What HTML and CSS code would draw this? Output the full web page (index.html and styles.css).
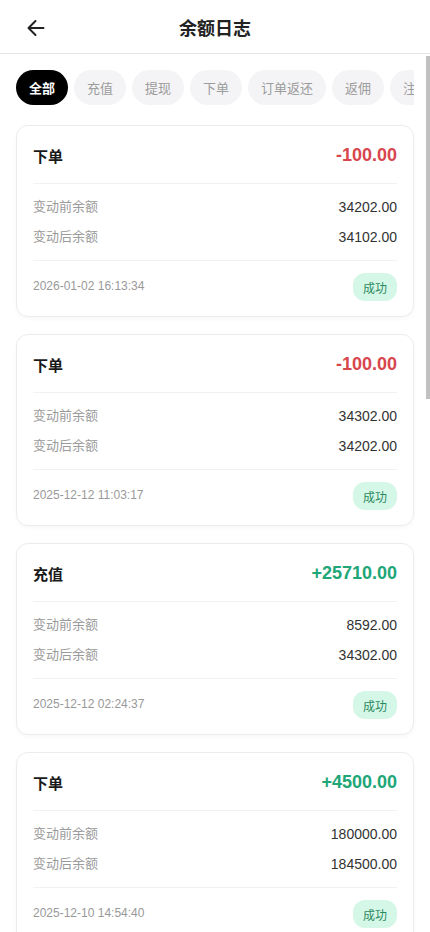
FILE: index.html
```html
<!DOCTYPE html>
<html lang="zh-CN">
<head>
<meta charset="utf-8">
<meta name="viewport" content="width=device-width, initial-scale=1">
<title>余额日志</title>
<link rel="stylesheet" href="styles.css">
</head>
<body>
<div class="app">
  <header class="topbar">
    <button class="back" aria-label="返回">
      <svg width="18" height="18" viewBox="0 0 18 18" fill="none" stroke="#222" stroke-width="2" stroke-linecap="round" stroke-linejoin="round"><path d="M16.5 9H1.5M8.5 2L1.5 9l7 7"/></svg>
    </button>
    <h1 class="title">余额日志</h1>
  </header>
  <div class="viewport">
    <main class="scroller">
      <nav class="tabs">
        <span class="tab active">全部</span>
        <span class="tab">充值</span>
        <span class="tab">提现</span>
        <span class="tab">下单</span>
        <span class="tab">订单返还</span>
        <span class="tab">返佣</span>
        <span class="tab">注册赠送</span>
      </nav>
      <section class="list">
        <article class="card">
          <div class="card-head"><span class="type">下单</span><span class="amount minus">-100.00</span></div>
          <div class="card-body">
            <div class="row"><span class="label">变动前余额</span><span class="value">34202.00</span></div>
            <div class="row"><span class="label">变动后余额</span><span class="value">34102.00</span></div>
          </div>
          <div class="card-foot"><span class="date">2026-01-02 16:13:34</span><span class="badge">成功</span></div>
        </article>
        <article class="card">
          <div class="card-head"><span class="type">下单</span><span class="amount minus">-100.00</span></div>
          <div class="card-body">
            <div class="row"><span class="label">变动前余额</span><span class="value">34302.00</span></div>
            <div class="row"><span class="label">变动后余额</span><span class="value">34202.00</span></div>
          </div>
          <div class="card-foot"><span class="date">2025-12-12 11:03:17</span><span class="badge">成功</span></div>
        </article>
        <article class="card">
          <div class="card-head"><span class="type">充值</span><span class="amount plus">+25710.00</span></div>
          <div class="card-body">
            <div class="row"><span class="label">变动前余额</span><span class="value">8592.00</span></div>
            <div class="row"><span class="label">变动后余额</span><span class="value">34302.00</span></div>
          </div>
          <div class="card-foot"><span class="date">2025-12-12 02:24:37</span><span class="badge">成功</span></div>
        </article>
        <article class="card">
          <div class="card-head"><span class="type">下单</span><span class="amount plus">+4500.00</span></div>
          <div class="card-body">
            <div class="row"><span class="label">变动前余额</span><span class="value">180000.00</span></div>
            <div class="row"><span class="label">变动后余额</span><span class="value">184500.00</span></div>
          </div>
          <div class="card-foot"><span class="date">2025-12-10 14:54:40</span><span class="badge">成功</span></div>
        </article>
        <article class="card">
          <div class="card-head"><span class="type">下单</span><span class="amount minus">-4500.00</span></div>
          <div class="card-body">
            <div class="row"><span class="label">变动前余额</span><span class="value">184500.00</span></div>
            <div class="row"><span class="label">变动后余额</span><span class="value">180000.00</span></div>
          </div>
          <div class="card-foot"><span class="date">2025-12-10 14:50:12</span><span class="badge">成功</span></div>
        </article>
        <article class="card">
          <div class="card-head"><span class="type">充值</span><span class="amount plus">+10000.00</span></div>
          <div class="card-body">
            <div class="row"><span class="label">变动前余额</span><span class="value">174500.00</span></div>
            <div class="row"><span class="label">变动后余额</span><span class="value">184500.00</span></div>
          </div>
          <div class="card-foot"><span class="date">2025-12-09 20:11:05</span><span class="badge">成功</span></div>
        </article>
      </section>
    </main>
    <div class="scroll-thumb" aria-hidden="true"></div>
  </div>
</div>
</body>
</html>
```
FILE: styles.css
```css
* { box-sizing: border-box; }
html, body { margin: 0; padding: 0; height: 100%; }
body {
  font-family: "Liberation Sans", Arial, "Noto Sans CJK SC", sans-serif;
  background: #fff;
  color: #222;
}
.app {
  height: 100vh;
  display: flex;
  flex-direction: column;
}
.topbar {
  flex: 0 0 auto;
  height: 54px;
  border-bottom: 1px solid #e6e6e6;
  display: flex;
  align-items: center;
  justify-content: center;
  position: relative;
}
.back {
  position: absolute;
  left: 26px;
  top: 18px;
  width: 20px;
  height: 20px;
  padding: 0 0 0 1px;
  border: 0;
  background: none;
  display: flex;
  align-items: center;
}
.title {
  margin: 0;
  font-size: 18px;
  font-weight: 700;
  color: #222;
  line-height: 1;
  font-family: "Noto Sans CJK SC", sans-serif;
}
.viewport {
  flex: 1 1 auto;
  min-height: 0;
  position: relative;
  display: flex;
}
.scroller {
  flex: 1 1 auto;
  overflow-y: auto;
  padding: 16px 16px 24px 16px;
  scrollbar-width: none;
}
.scroller::-webkit-scrollbar { display: none; }
.scroll-thumb {
  position: absolute;
  right: 0;
  top: 2px;
  width: 4px;
  height: 343px;
  background: #c1c1c1;
}

.tabs {
  display: flex;
  gap: 6px;
  overflow-x: auto;
  margin-bottom: 20px;
  scrollbar-width: none;
}
.tabs::-webkit-scrollbar { display: none; }
.tab {
  flex: 0 0 auto;
  height: 35px;
  padding: 0 13px;
  border-radius: 18px;
  background: #f4f4f6;
  color: #9c9c9c;
  font-size: 13px;
  display: flex;
  align-items: center;
  font-family: "Noto Sans CJK SC", sans-serif;
}
.tab.active {
  background: #000;
  color: #fff;
  font-weight: 700;
}
.list {
  display: flex;
  flex-direction: column;
  gap: 17px;
}
.card {
  border: 1px solid #ececec;
  border-radius: 12px;
  padding: 0 16px;
  background: #fff;
  box-shadow: 0 2px 4px rgba(0,0,0,0.03);
}
.card-head {
  height: 58px;
  border-bottom: 1px solid #f2f2f2;
  display: flex;
  align-items: center;
  justify-content: space-between;
  padding-top: 1px;
}
.type {
  font-size: 15px;
  font-weight: 700;
  color: #1a1a1a;
}
.amount {
  font-size: 18px;
  font-weight: 700;
}
.amount.minus { color: #d8464e; }
.amount.plus { color: #20a677; }
.card-body {
  padding: 8px 0;
  border-bottom: 1px solid #f2f2f2;
}
.row {
  height: 30px;
  display: flex;
  align-items: center;
  justify-content: space-between;
}
.label {
  font-size: 13px;
  color: #9a9a9a;
  position: relative;
  top: -2px;
}
.value {
  font-size: 14px;
  color: #333;
}
.card-foot {
  height: 55px;
  padding: 12px 0 15px;
  display: flex;
  align-items: center;
  justify-content: space-between;
}
.date {
  font-size: 12px;
  color: #999;
  position: relative;
  top: -1px;
}
.badge {
  height: 28px;
  padding: 0 10px;
  border-radius: 12px;
  background: #d5f7e7;
  color: #2c8a5f;
  font-size: 12px;
  display: flex;
  align-items: center;
}
```
